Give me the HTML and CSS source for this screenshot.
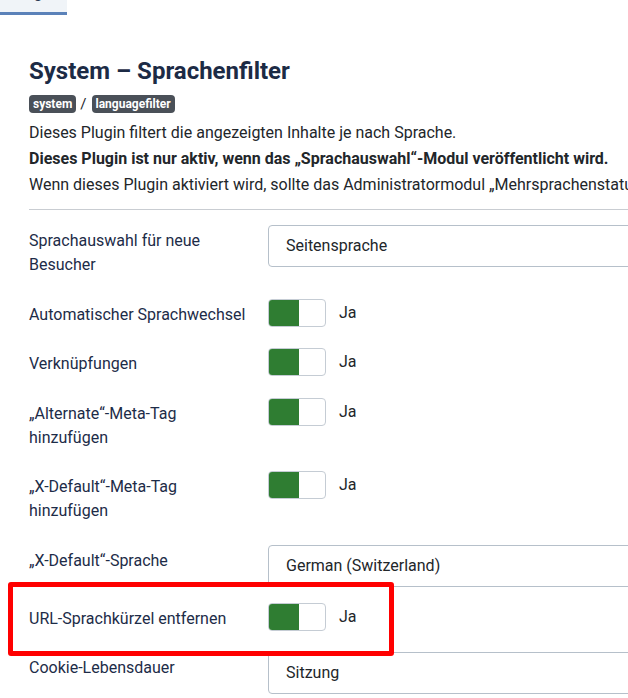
FILE: index.html
```html
<!DOCTYPE html>
<html lang="de">
<head>
  <meta charset="UTF-8">
  <meta name="viewport" content="width=device-width, initial-scale=1.0">
  <title>System – Sprachenfilter</title>
  <link rel="stylesheet" href="styles.css">
</head>
<body>

  <!-- Tabs -->
  <div class="tabs">
    <a class="tab active" href="#">Plugin</a>
  </div>

  <div class="page">
    <h1 class="title">System – Sprachenfilter</h1>
    <div class="badges">
      <span class="badge">system</span><span class="sep">/</span><span class="badge">languagefilter</span>
    </div>

    <div class="desc">
      <p>Dieses Plugin filtert die angezeigten Inhalte je nach Sprache.</p>
      <p><strong>Dieses Plugin ist nur aktiv, wenn das „Sprachauswahl“-Modul veröffentlicht wird.</strong></p>
      <p>Wenn dieses Plugin aktiviert wird, sollte das Administratormodul „Mehrsprachenstatus“ ebenfalls veröffentlicht werden.</p>
    </div>

    <hr class="divider">

    <!-- Options -->
    <div class="form">
      <div class="row">
        <label class="label">Sprachauswahl für neue Besucher</label>
        <div class="control"><div class="select">Seitensprache</div></div>
      </div>
      <div class="row">
        <label class="label">Automatischer Sprachwechsel</label>
        <div class="control"><span class="switch"><span class="knob"></span></span><span class="state">Ja</span></div>
      </div>
      <div class="row">
        <label class="label">Verknüpfungen</label>
        <div class="control"><span class="switch"><span class="knob"></span></span><span class="state">Ja</span></div>
      </div>
      <div class="row">
        <label class="label">„Alternate“-Meta-Tag hinzufügen</label>
        <div class="control"><span class="switch"><span class="knob"></span></span><span class="state">Ja</span></div>
      </div>
      <div class="row">
        <label class="label">„X-Default“-Meta-Tag hinzufügen</label>
        <div class="control"><span class="switch"><span class="knob"></span></span><span class="state">Ja</span></div>
      </div>
      <div class="row">
        <label class="label">„X-Default“-Sprache</label>
        <div class="control"><div class="select">German (Switzerland)</div></div>
      </div>
      <div class="row row-marked">
        <label class="label">URL-Sprachkürzel entfernen</label>
        <div class="control"><span class="switch"><span class="knob"></span></span><span class="state">Ja</span></div>
        <div class="mark"></div>
      </div>
      <div class="row">
        <label class="label">Cookie-Lebensdauer</label>
        <div class="control"><div class="select">Sitzung</div></div>
      </div>
    </div>
  </div>

</body>
</html>
```

FILE: styles.css
```css
body {
  margin: 0;
  font-family: Roboto, 'Liberation Sans', sans-serif;
  background-color: #fff;
  color: #22262a;
  overflow: hidden;
}

.tabs {
  width: 900px;
  height: 15px;
  border-bottom: 1px solid #dde3ea;
}

.tab {
  display: block;
  width: 56px;
  height: 31px;
  margin-top: -19px;
  padding-left: 11px;
  background-color: #f0f4f8;
  border-bottom: 3px solid #5b82b9;
  color: #22304a;
  font-size: 16px;
  line-height: 24px;
  text-decoration: none;
}

.page {
  width: 880px;
  padding-left: 29px;
}

.title {
  margin: 61px 0 11px;
  font-size: 24px;
  line-height: 26px;
  font-weight: 700;
  color: #1c2b45;
}

.badges {
  display: flex;
  align-items: center;
  height: 18px;
}

.badge {
  background-color: #4a5058;
  color: white;
  font-size: 12px;
  font-weight: 700;
  line-height: 18px;
  padding: 0 4px;
  border-radius: 4px;
}

.sep {
  margin: 0 5px 0 4px;
  font-size: 15px;
  color: #22262a;
}

.desc {
  margin-top: 7px;
}

.desc p {
  margin: 0;
  font-size: 16px;
  line-height: 26px;
}

.divider {
  margin: 11px 0 15px;
  border: none;
  border-top: 1px solid #c9cdd2;
}

.row {
  display: flex;
  align-items: flex-start;
  margin-bottom: 16px;
  position: relative;
}

.label {
  width: 225px;
  margin-right: 14px;
  padding: 4px 0 5.5px;
  font-size: 16px;
  line-height: 24px;
  color: #1d2c48;
}

.control {
  display: flex;
  align-items: center;
}

.select {
  box-sizing: border-box;
  width: 420px;
  height: 42px;
  padding: 0 17px;
  border: 1px solid #b6c0ca;
  border-radius: 4px;
  font-size: 16px;
  line-height: 40px;
  color: #22262a;
}

.switch {
  box-sizing: border-box;
  display: inline-block;
  width: 58px;
  height: 28px;
  border: 1px solid #c5ccd4;
  border-radius: 4px;
  background-color: #fff;
}

.knob {
  display: block;
  width: 30px;
  height: 26px;
  background-color: #2f7d32;
  border-radius: 3px 0 0 3px;
}

.state {
  margin-left: 13px;
  font-size: 16px;
  line-height: 26px;
  color: #22262a;
}

/* highlight round the edited option */
.mark {
  position: absolute;
  top: -21px;
  left: -21px;
  width: 376px;
  height: 64px;
  border: 5px solid #f00;
  border-radius: 3px;
  z-index: 2;
}
```
